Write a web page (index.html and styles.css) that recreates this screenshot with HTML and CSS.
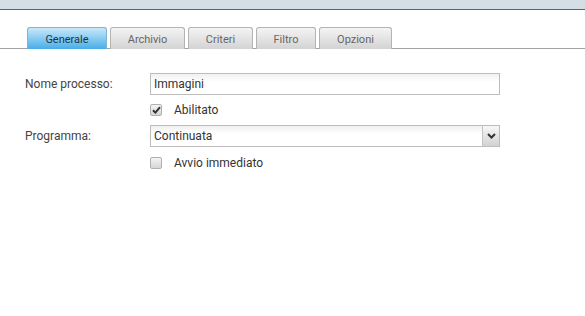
FILE: index.html
```html
<!DOCTYPE html>
<html lang="it">
<head>
    <meta charset="UTF-8">
    <title>Processo</title>
    <link rel="stylesheet" href="styles.css">
</head>
<body>
    <div class="topbar"></div>

    <div class="tabs">
        <div class="tab active" style="width: 80px">Generale</div>
        <div class="tab" style="width: 75px">Archivio</div>
        <div class="tab" style="width: 65px">Criteri</div>
        <div class="tab" style="width: 60px">Filtro</div>
        <div class="tab" style="width: 73px">Opzioni</div>
    </div>

    <div class="form">
        <div class="row">
            <label class="lbl" for="nome">Nome processo:</label>
            <input class="field" type="text" id="nome" value="Immagini">
        </div>
        <div class="row check-row">
            <span class="lbl"></span>
            <span class="box checked"><svg width="9" height="8" viewBox="0 0 9 8"><path d="M1 4.2 L3.4 6.6 L8 1.2" fill="none" stroke="#333" stroke-width="2"/></svg></span>
            <span class="check-text">Abilitato</span>
        </div>
        <div class="row">
            <label class="lbl" for="prog">Programma:</label>
            <div class="select">
                <span class="select-text">Continuata</span>
                <span class="select-btn"><svg width="9" height="6" viewBox="0 0 9 6"><path d="M1 1 L4.5 4.5 L8 1" fill="none" stroke="#333" stroke-width="2"/></svg></span>
            </div>
        </div>
        <div class="row check-row">
            <span class="lbl"></span>
            <span class="box"></span>
            <span class="check-text">Avvio immediato</span>
        </div>
    </div>
</body>
</html>
```

FILE: styles.css
```css
body {
    margin: 0;
    background-color: #fff;
    font-family: Roboto, "Liberation Sans", sans-serif;
    font-size: 12px;
    color: #333;
}

.topbar {
    height: 9px;
    background-color: #d6dee5;
    border-bottom: 1px solid #5b6670;
}

.tabs {
    display: flex;
    gap: 3px;
    padding: 17px 0 0 27px;
    border-bottom: 1px solid #a3a3a3;
    height: 21px;
}

.tab {
    box-sizing: border-box;
    height: 22px;
    border: 1px solid #b3b3b3;
    border-bottom: none;
    border-radius: 3px 3px 0 0;
    background: linear-gradient(#f4f4f4, #d3d3d3);
    color: #666;
    font-size: 11px;
    text-align: center;
    line-height: 23px;
}

.tab.active {
    border-color: #7fb4d6;
    background: linear-gradient(#c9e8fa, #46aee8);
    color: #1f3445;
}

.form {
    padding: 24px 0 0 25px;
}

.row {
    display: flex;
    align-items: center;
}

.lbl {
    width: 125px;
    flex: none;
    color: #444;
}

.field, .select {
    box-sizing: border-box;
    width: 350px;
    height: 22px;
    border: 1px solid #bdbdbd;
    background: linear-gradient(#f0f0f0, #fff 40%);
    font-family: Roboto, "Liberation Sans", sans-serif;
    font-size: 12px;
    color: #333;
    padding: 0 3px;
    margin: 0;
    outline: none;
}

.check-row {
    height: 30px;
}

.check-row:last-child {
    height: 32px;
}

.box {
    box-sizing: border-box;
    width: 12px;
    height: 12px;
    border: 1px solid #b0b0b0;
    border-radius: 2px;
    background: linear-gradient(#f4f4f4, #d6d6d6);
    display: flex;
    align-items: center;
    justify-content: center;
}

.check-text {
    margin-left: 12px;
}

.select {
    display: flex;
    align-items: center;
    padding: 0 0 0 3px;
}

.select-text {
    flex: 1;
}

.select-btn {
    box-sizing: border-box;
    width: 17px;
    height: 20px;
    border-left: 1px solid #c4c4c4;
    background: linear-gradient(#f7f7f7, #d2d2d2);
    display: flex;
    align-items: center;
    justify-content: center;
}
```
